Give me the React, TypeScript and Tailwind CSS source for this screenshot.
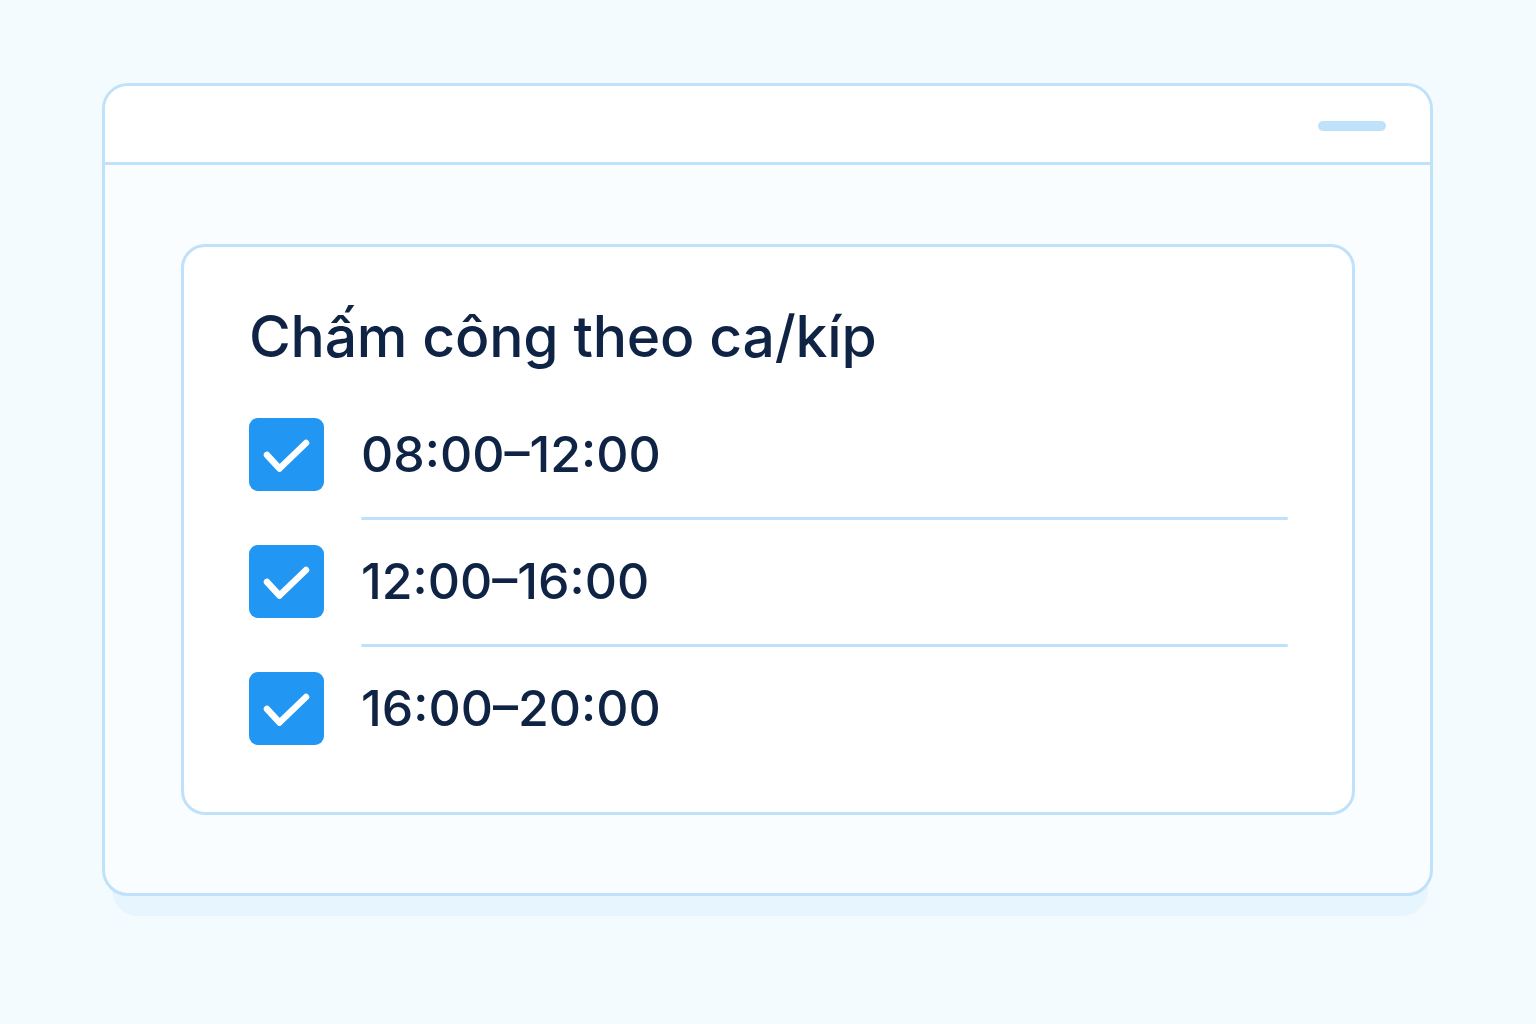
import React from 'react';

const shifts = ['08:00–12:00', '12:00–16:00', '16:00–20:00'];

function CheckBox() {
  return (
    <div className="w-[75px] h-[73px] rounded-[9px] bg-[#2196f3] shrink-0">
      <svg width="75" height="73" viewBox="0 0 75 73" fill="none">
        <path d="M18 37 L30.5 50.5 L57 25" stroke="white" strokeWidth="6.5" strokeLinecap="round" strokeLinejoin="round" />
      </svg>
    </div>
  );
}

export default function App() {
  return (
    <div className="w-[1536px] h-[1024px] bg-[#f4fbfe] pt-[83px] pl-[102px]" style={{ fontFamily: 'Inter, "Noto Sans", sans-serif' }}>
      <div className="relative w-[1331px]">
        {/* shadow under the window */}
        <div className="absolute left-[10px] right-[5px] top-[30px] h-[803px] rounded-[26px] bg-[#e6f5fe]" />
        <div className="relative h-[813px] rounded-[26px] border-[3px] border-[#c0e1fa] bg-[#f9fdff] overflow-hidden">
          {/* title bar */}
          <div className="h-[79px] bg-white border-b-[3px] border-[#c0e1fa] flex items-center justify-end pr-[44px]">
            <div className="w-[68px] h-[10px] rounded-full bg-[#c0e1fa] mt-[4px]" />
          </div>
          <div className="pt-[79px] pl-[76px]">
            <div className="w-[1174px] h-[571px] rounded-[24px] border-[3px] border-[#c0e1fa] bg-white pl-[65px] pt-[54px]">
              <h1 className="text-[57px] leading-[72px] tracking-[-0.2px] text-[#0f2344] font-medium">Chấm công theo ca/kíp</h1>
              <div className="mt-[45px]">
                {shifts.map((s, i) => (
                  <div key={s} className="flex items-start">
                    <CheckBox />
                    <div className="ml-[37px] flex-1 mr-[64px]">
                      <div className="h-[73px] flex items-center text-[50px] font-medium text-[#0f2344] tracking-[0px]">{s}</div>
                      {i < shifts.length - 1 && <div className="mt-[26px] mb-[25px] h-[3px] rounded-full bg-[#c0e1fa]" />}
                    </div>
                  </div>
                ))}
              </div>
            </div>
          </div>
        </div>
      </div>
    </div>
  );
}
